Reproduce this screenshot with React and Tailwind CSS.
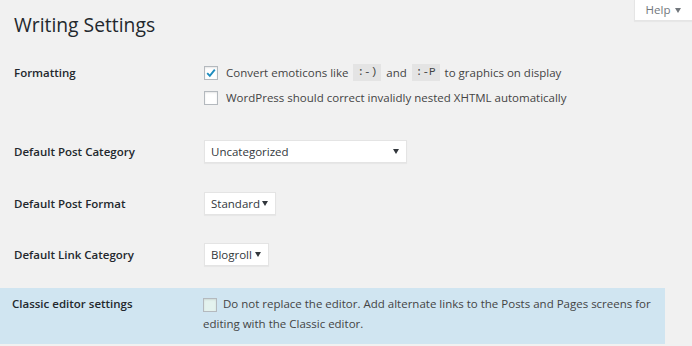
import React from "react";

function Check({ checked, tinted }) {
  return (
    <span
      className={`inline-flex items-center justify-center w-[14px] h-[14px] border border-[#b4b9be] shadow-[inset_0_1px_2px_rgba(0,0,0,0.1)] align-middle ${
        tinted ? "bg-[#e4f2ee]" : "bg-white"
      }`}
    >
      {checked && (
        <svg width="12" height="12" viewBox="0 0 12 12">
          <polyline points="2.2,6.2 4.8,8.8 9.8,2.6" fill="none" stroke="#1e8cbe" strokeWidth="1.9" />
        </svg>
      )}
    </span>
  );
}

function Arrow() {
  return (
    <svg width="6" height="5" viewBox="0 0 6 5" className="shrink-0">
      <polygon points="0,0 6,0 3,5" fill="#32373c" />
    </svg>
  );
}

function Select({ label, w }) {
  return (
    <div
      className={`${w} h-[23px] bg-white border border-[#e4e4e4] shadow-[0_1px_1px_rgba(0,0,0,0.04)] flex items-center justify-between pl-[6px] pr-[7px] text-[11.5px] text-[#32373c]`}
    >
      <span>{label}</span>
      <Arrow />
    </div>
  );
}

function Code({ children }) {
  return (
    <code className="inline-block bg-[#e4e4e4] px-[4px] h-[17px] leading-[17px] text-[11px] text-[#444] align-middle" style={{ fontFamily: '"Liberation Mono", monospace' }}>
      {children}
    </code>
  );
}

function Label({ children, cls = "pl-[14px]" }) {
  return <div className={`${cls} text-[11.5px] font-semibold text-[#23282d]`}>{children}</div>;
}

export default function App() {
  return (
    <div
      className="w-[692px] h-[346px] bg-[#f1f1f1] overflow-hidden text-[#444]"
      style={{ fontFamily: '"Open Sans", "Noto Sans", sans-serif' }}
    >
      <div className="flex justify-between items-start h-[39px]">
        <h1 className="pl-[14px] pt-[11px] text-[19.3px] leading-[28px] text-[#23282d]">Writing Settings</h1>
        <div className="w-[58px] h-[21px] bg-white border-l border-b border-[#e5e5e5] shadow-[0_1px_1px_rgba(0,0,0,0.04)] flex items-center justify-center gap-[5px] text-[11.5px] text-[#72777c]">
          <span>Help</span>
          <svg width="6" height="5" viewBox="0 0 6 5">
            <polygon points="0,0 6,0 3,5" fill="#72777c" />
          </svg>
        </div>
      </div>

      <div className="mt-[21px] grid grid-cols-[204px_1fr]">
        <div className="h-[25px] flex items-center">
          <Label>Formatting</Label>
        </div>
        <div className="flex flex-col text-[11.5px]">
          <div className="h-[25px] flex items-center gap-[8px]">
            <Check checked />
            <span className="flex items-center gap-[5px]">
              Convert emoticons like <Code>:-)</Code> and <Code>:-P</Code> to graphics on display
            </span>
          </div>
          <div className="h-[25px] flex items-center gap-[8px]">
            <Check />
            <span>WordPress should correct invalidly nested XHTML automatically</span>
          </div>
        </div>
      </div>

      <div className="mt-[30px] grid grid-cols-[204px_1fr] items-center">
        <Label>Default Post Category</Label>
        <Select label="Uncategorized" w="w-[203px]" />
      </div>

      <div className="mt-[29px] grid grid-cols-[204px_1fr] items-center">
        <Label>Default Post Format</Label>
        <Select label="Standard" w="w-[72px]" />
      </div>

      <div className="mt-[28px] grid grid-cols-[204px_1fr] items-center">
        <Label>Default Link Category</Label>
        <Select label="Blogroll" w="w-[65px]" />
      </div>

      <div className="mt-[22px] w-[665px] h-[56px] bg-[#d0e5f1] grid grid-cols-[203px_1fr] pt-[6px]">
        <div className="h-[20px] flex items-center">
          <Label cls="pl-[12px]">Classic editor settings</Label>
        </div>
        <div className="pr-[8px] text-[11.5px] leading-[20px] text-[#444]">
          <Check tinted /> <span className="ml-[3px]">Do not replace the editor. Add alternate links to the Posts and Pages screens for editing with the Classic editor.</span>
        </div>
      </div>
    </div>
  );
}
